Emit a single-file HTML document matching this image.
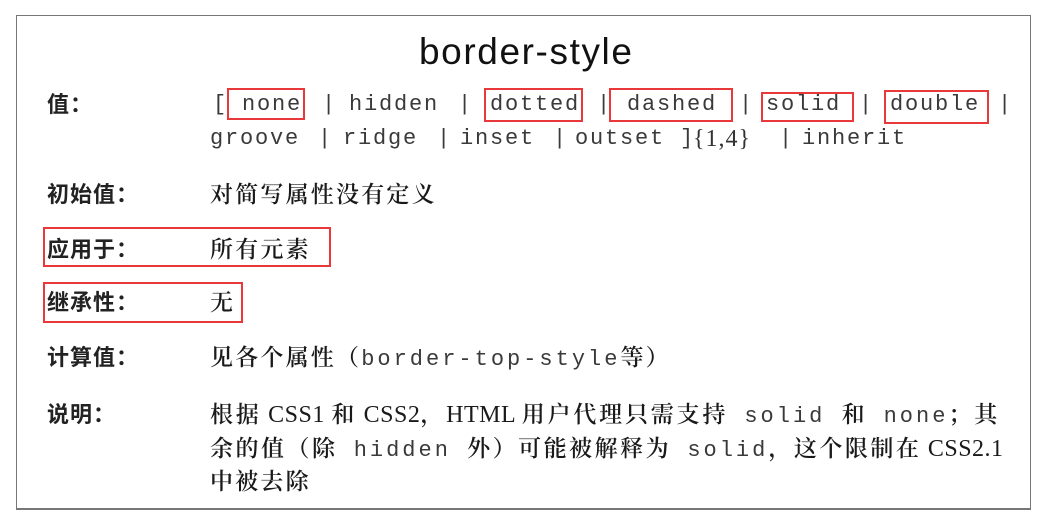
<!DOCTYPE html>
<html><head><meta charset="utf-8"><style>
html,body{margin:0;padding:0;background:#fff;}
body{width:1064px;height:526px;position:relative;overflow:hidden;font-family:"Liberation Serif","Noto Serif CJK SC",serif;color:#222;}
.box{position:absolute;left:16px;top:15px;width:1013px;height:492px;border:1.5px solid #777;border-bottom-width:2px;}
.a{position:absolute;white-space:nowrap;line-height:1;}
.lab{font-family:"Noto Sans CJK SC",sans-serif;font-weight:bold;font-size:22px;color:#222;left:47px;letter-spacing:1px;}
.cj{font-family:"Noto Serif CJK SC",serif;font-size:23px;color:#1a1a1a;letter-spacing:2.2px;font-weight:600;}
.l{font-family:"Liberation Serif",serif;font-weight:normal;font-size:24px;letter-spacing:0.5px;}
.cj .m{font-weight:normal;letter-spacing:3px;}
.m{font-family:"Liberation Mono",monospace;font-size:22px;color:#3a3a3a;letter-spacing:1.8px;}
.r{position:absolute;border:2px solid #e8383a;}
.t{font-family:"Liberation Sans",sans-serif;font-size:37px;color:#111;letter-spacing:1.6px;}
</style></head><body>
<div class="box"></div>
<div class="a t" style="left:419px;top:33px;">border-style</div>

<div class="a lab" style="top:92px;">值：</div>
<div class="a m" style="left:213px;top:94px;">[</div>
<div class="a m" style="left:242px;top:94px;">none</div>
<div class="a m" style="left:322px;top:94px;">|</div>
<div class="a m" style="left:349px;top:94px;">hidden</div>
<div class="a m" style="left:458px;top:94px;">|</div>
<div class="a m" style="left:490px;top:94px;">dotted</div>
<div class="a m" style="left:597px;top:94px;">|</div>
<div class="a m" style="left:627px;top:94px;">dashed</div>
<div class="a m" style="left:739px;top:94px;">|</div>
<div class="a m" style="left:766px;top:94px;">solid</div>
<div class="a m" style="left:859px;top:94px;">|</div>
<div class="a m" style="left:890px;top:94px;">double</div>
<div class="a m" style="left:998px;top:94px;">|</div>

<div class="a m" style="left:210px;top:128px;">groove</div>
<div class="a m" style="left:318px;top:128px;">|</div>
<div class="a m" style="left:343px;top:128px;">ridge</div>
<div class="a m" style="left:437px;top:128px;">|</div>
<div class="a m" style="left:460px;top:128px;">inset</div>
<div class="a m" style="left:553px;top:128px;">|</div>
<div class="a m" style="left:575px;top:128px;">outset</div>
<div class="a m" style="left:680px;top:128px;">]</div>
<div class="a" style="left:693px;top:127px;font-size:24px;color:#333;letter-spacing:1px;">{1,4}</div>
<div class="a m" style="left:779px;top:128px;">|</div>
<div class="a m" style="left:802px;top:128px;">inherit</div>

<div class="r" style="left:227px;top:88px;width:74px;height:28px;"></div>
<div class="r" style="left:484px;top:88px;width:95px;height:30px;"></div>
<div class="r" style="left:609px;top:88px;width:120px;height:30px;"></div>
<div class="r" style="left:761px;top:92px;width:89px;height:26px;"></div>
<div class="r" style="left:884px;top:90px;width:101px;height:30px;"></div>

<div class="a lab" style="top:182px;">初始值：</div>
<div class="a cj" style="left:210px;top:181px;">对简写属性没有定义</div>

<div class="a lab" style="top:237px;">应用于：</div>
<div class="a cj" style="left:210px;top:236px;">所有元素</div>
<div class="r" style="left:43px;top:227px;width:284px;height:36px;"></div>

<div class="a lab" style="top:290px;">继承性：</div>
<div class="a cj" style="left:210px;top:289px;">无</div>
<div class="r" style="left:43px;top:282px;width:196px;height:37px;"></div>

<div class="a lab" style="top:345px;">计算值：</div>
<div class="a cj" style="left:210px;top:344px;">见各个属性（<span class="m">border-top-style</span>等）</div>

<div class="a lab" style="top:402px;">说明：</div>
<div class="a cj" style="left:210px;top:401px;letter-spacing:2.8px;">根据<span class="l"> CSS1 </span>和<span class="l"> CSS2</span>，<span class="l">HTML </span>用户代理只需支持<span class="m"> solid </span>和<span class="m"> none</span>；其</div>
<div class="a cj" style="left:210px;top:435px;letter-spacing:2.5px;">余的值（除<span class="m"> hidden </span>外）可能被解释为<span class="m"> solid</span>，这个限制在<span class="l"> CSS2.1</span></div>
<div class="a cj" style="left:210px;top:468px;">中被去除</div>
</body></html>
